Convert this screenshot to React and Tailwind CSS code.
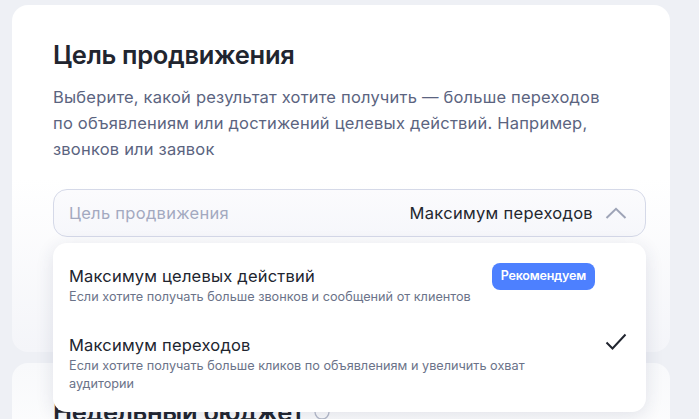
import React from "react";

export default function App() {
  return (
    <div
      className="w-[699px] h-[419px] overflow-hidden bg-[#eef0f5] px-[12px] pt-[5px] flex flex-col gap-[11px]"
      style={{ fontFamily: "Inter, 'Noto Sans', sans-serif" }}
    >
      <div className="w-[658px] h-[347px] rounded-[16px] bg-gradient-to-b from-white via-white to-[#f4f5f9] pl-[41px] pt-[34px] shrink-0 relative">
        <h1 className="text-[25.5px] leading-[32px] font-semibold text-[#21252f] tracking-[-0.3px]">Цель продвижения</h1>
        <p className="mt-[13px] text-[16.5px] leading-[26px] text-[#5b6480] tracking-[0.2px]">
          Выберите, какой результат хотите получить — больше переходов
          <br />
          по объявлениям или достижений целевых действий. Например,
          <br />
          звонков или заявок
        </p>
        <div className="relative mt-[27px] w-[593px]">
          <div className="h-[48px] rounded-[14px] border border-[#d5d9e8] bg-gradient-to-b from-[#fbfbfd] to-[#f6f7fb] flex items-center pl-[15px] pr-[18px]">
            <span className="text-[16.5px] tracking-[0.3px] text-[#a3a9c0]">Цель продвижения</span>
            <span className="ml-auto text-[16.5px] tracking-[0.3px] text-[#23272f]">Максимум переходов</span>
            <svg width="22" height="12" viewBox="0 0 22 12" className="ml-[12px]">
              <path d="M1.5 11 L11 1.8 L20.5 11" fill="none" stroke="#9ea4b7" strokeWidth="2" />
            </svg>
          </div>
          <div className="absolute left-0 top-[54px] w-[593px] h-[169px] rounded-[14px] bg-white shadow-[0_4px_18px_rgba(40,50,90,0.12)] pl-[16px] pr-[19px] pt-[20px] z-10">
            <div className="flex items-start">
              <div className="pt-[2px]">
                <div className="text-[16.5px] leading-[22px] tracking-[0.2px] text-[#21252f]">Максимум целевых действий</div>
                <div className="mt-[1px] text-[12.7px] leading-[18px] text-[#6b7389]">Если хотите получать больше звонков и сообщений от клиентов</div>
              </div>
              <span className="ml-auto mr-[32px] rounded-[8px] bg-[#4d80ff] text-white text-[12.5px] font-semibold h-[27px] px-[9px] flex items-center tracking-[-0.2px]">Рекомендуем</span>
            </div>
            <div className="flex items-start mt-[28px]">
              <div className="w-[480px]">
                <div className="text-[16.5px] leading-[22px] tracking-[0.2px] text-[#21252f]">Максимум переходов</div>
                <div className="mt-[1px] text-[12.7px] leading-[18px] text-[#6b7389]">Если хотите получать больше кликов по объявлениям и увеличить охват аудитории</div>
              </div>
              <svg width="22" height="18" viewBox="0 0 22 18" className="ml-auto mt-[-1px]">
                <path d="M1.5 9.5 L7.5 15.5 L20.5 1.5" fill="none" stroke="#21252f" strokeWidth="2" />
              </svg>
            </div>
          </div>
        </div>
      </div>
      <div className="w-[658px] h-[120px] rounded-[16px] bg-gradient-to-b from-[#f8f9fb] to-white pl-[41px] pt-[33px] shrink-0">
        <div className="flex items-center gap-[10px]">
          <span className="text-[25.5px] leading-[32px] font-semibold text-[#21252f] tracking-[-0.3px]">Недельный бюджет</span>
          <svg width="16" height="16" viewBox="0 0 16 16">
            <circle cx="8" cy="8" r="7" fill="none" stroke="#b7bccb" strokeWidth="1.3" />
          </svg>
        </div>
      </div>
    </div>
  );
}
